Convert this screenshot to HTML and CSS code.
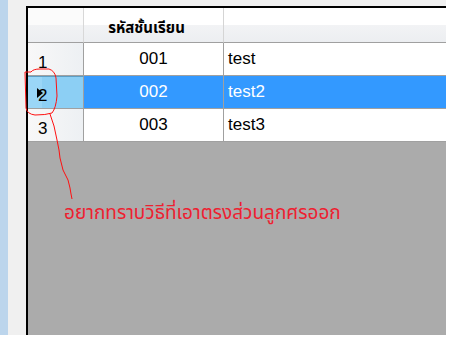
FILE: index.html
```html
<!DOCTYPE html>
<html>
<head>
<meta charset="utf-8">
<link rel="stylesheet" href="styles.css">
</head>
<body>
<div class="frame">
  <div class="strip"></div>
  <div class="panel">
    <div class="grid">
      <div class="row head">
        <div class="rh corner"></div>
        <div class="ch c1"><span>รหัสชั้นเรียน</span></div>
        <div class="ch c2"></div>
      </div>
      <div class="row">
        <div class="rh"><span class="num">1</span></div>
        <div class="cell c1 center">001</div>
        <div class="cell c2">test</div>
      </div>
      <div class="row sel">
        <div class="rh rh-sel"><span class="arrow"></span><span class="num">2</span></div>
        <div class="cell c1 center">002</div>
        <div class="cell c2">test2</div>
      </div>
      <div class="row">
        <div class="rh"><span class="num">3</span></div>
        <div class="cell c1 center">003</div>
        <div class="cell c2">test3</div>
      </div>
    </div>
  </div>
  <svg class="mark" width="456" height="338" viewBox="0 0 456 338">
    <path d="M25,72 L31,72 Q33,69 40,69 L49,69 Q55,71 56,78 L57,96 Q56,108 52,113 Q46,115 35,115 Q27,114 26,108 Z" fill="none" stroke="#ff1010" stroke-width="1"/>
    <polyline points="50,114 54,126 57,140 59,150 60,158 63,170 68,180 70,188 71,194 72,199" fill="none" stroke="#ff1010" stroke-width="1"/>
  </svg>
  <div class="note">อยากทราบวิธีที่เอาตรงส่วนลูกศรออก</div>
</div>
</body>
</html>
```

FILE: styles.css
```css
html, body {
  margin: 0;
  padding: 0;
  background: #ffffff;
}
.frame {
  position: relative;
  width: 446px;
  height: 335px;
  display: flex;
}
.strip {
  width: 8px;
  background: #bcd5ec;
}
.panel {
  flex: 1;
  background: #f0f0f0;
  padding: 6px 0 0 18px;
  display: flex;
}
.grid {
  flex: 1;
  border-top: 2px solid #000;
  border-left: 2px solid #000;
  background: #ababab;
  font-family: "Liberation Sans", Arial, sans-serif;
  font-size: 17px;
  color: #000;
}
.row {
  display: grid;
  grid-template-columns: 56px 140px 1fr;
  height: 33px;
}
.row.head {
  height: 35px;
}
.rh {
  position: relative;
  border-right: 1px solid #a0a0a0;
  border-bottom: 1px solid #a0a0a0;
  background: linear-gradient(to right, #f8f8f8, #edf0f3);
  display: flex;
  align-items: flex-end;
  padding-left: 10px;
  padding-bottom: 3px;
}
.corner {
  background: linear-gradient(#fbfbfb 0%, #fbfbfb 50%, #f1f2f4 51%, #eceef1 100%);
  border-right: 1px solid #d8d8d8;
}
.rh-sel {
  background: linear-gradient(to right, #9ad6f7 0%, #9ad6f7 25%, #8ccff4 26%, #8ccff4 100%);
  border-top: 1px solid #5c9ec4;
}
.num {
  line-height: 18px;
}
.arrow {
  position: absolute;
  left: 9px;
  top: 11px;
  width: 0;
  height: 0;
  border-top: 5px solid transparent;
  border-bottom: 5px solid transparent;
  border-left: 6px solid #000;
}
.ch {
  border-right: 1px solid #d5d5d5;
  border-bottom: 1px solid #a0a0a0;
  background: linear-gradient(#ffffff 0%, #ffffff 50%, #f2f3f5 51%, #eceef1 100%);
  display: flex;
  align-items: center;
  justify-content: center;
  font-family: Tahoma, "Noto Sans Thai", "Noto Sans", sans-serif;
  font-weight: bold;
  font-size: 15px;
  padding-right: 14px;
  padding-top: 6px;
}
.ch.c2 {
  border-right: none;
}
.cell {
  background: #ffffff;
  border-right: 1px solid #a0a0a0;
  border-bottom: 1px solid #a0a0a0;
  display: flex;
  align-items: center;
  padding-left: 4px;
}
.cell.c2 {
  border-right: none;
}
.cell.center {
  justify-content: center;
  padding-left: 0;
}
.sel .cell {
  background: #3399ff;
  color: #ffffff;
}
.mark {
  position: absolute;
  left: 0;
  top: 0;
  pointer-events: none;
}
.note {
  position: absolute;
  left: 64px;
  top: 199px;
  color: #ee2030;
  font-family: Tahoma, "Noto Sans Thai", "Noto Sans", sans-serif;
  font-size: 19px;
  white-space: nowrap;
}
```
